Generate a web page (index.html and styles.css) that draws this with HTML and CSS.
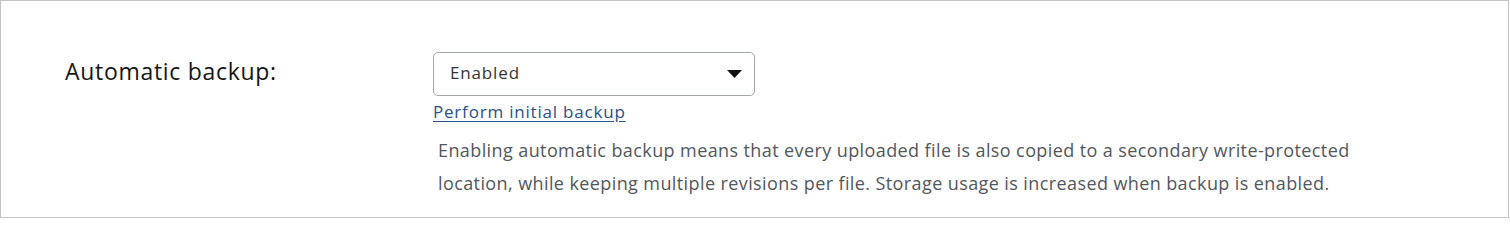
FILE: index.html
```
<!DOCTYPE html>
<html lang="en">
<head>
<meta charset="utf-8">
<title>Automatic backup</title>
<link rel="stylesheet" href="styles.css">
</head>
<body>
<div class="panel">
  <div class="row">
    <div class="label">Automatic backup:</div>
    <div class="control">
      <div class="select">
        <span class="select-value">Enabled</span>
        <svg class="caret" width="15" height="8" viewBox="0 0 15 8"><path d="M0 0H15L7.5 8Z" fill="#111"/></svg>
      </div>
      <a class="link" href="#">Perform initial backup</a>
      <p class="help">Enabling automatic backup means that every uploaded file is also copied to a secondary write-protected<br>location, while keeping multiple revisions per file. Storage usage is increased when backup is enabled.</p>
    </div>
  </div>
</div>
</body>
</html>
```
FILE: styles.css
```
html, body {
  margin: 0;
  padding: 0;
  background: #fff;
}
.panel {
  box-sizing: border-box;
  width: 1509px;
  height: 218px;
  border: 1px solid #c4c4c4;
  padding: 51px 0 0 64px;
  font-family: "Open Sans", "Noto Sans", sans-serif;
}
.row {
  display: grid;
  grid-template-columns: 368px 1fr;
}
.label {
  font-size: 23px;
  line-height: 38px;
  letter-spacing: 0.7px;
  color: #161616;
}
.control {
  display: flex;
  flex-direction: column;
  align-items: flex-start;
}
.select {
  box-sizing: border-box;
  width: 322px;
  height: 44px;
  border: 1px solid #a3a7ab;
  border-radius: 5px;
  display: flex;
  align-items: center;
  justify-content: space-between;
  padding: 0 12px 3px 16px;
  font-size: 17px;
  letter-spacing: 0.85px;
  color: #333;
}
.caret {
  margin-top: 3px;
}
.link {
  margin-top: 3px;
  font-size: 17px;
  line-height: 26px;
  letter-spacing: 0.8px;
  color: #2a5088;
  text-decoration: underline;
  text-underline-offset: 3px;
}
.help {
  margin: 9px 0 0 5px;
  font-size: 18px;
  line-height: 33px;
  letter-spacing: 0.4px;
  color: #51575d;
}
```
